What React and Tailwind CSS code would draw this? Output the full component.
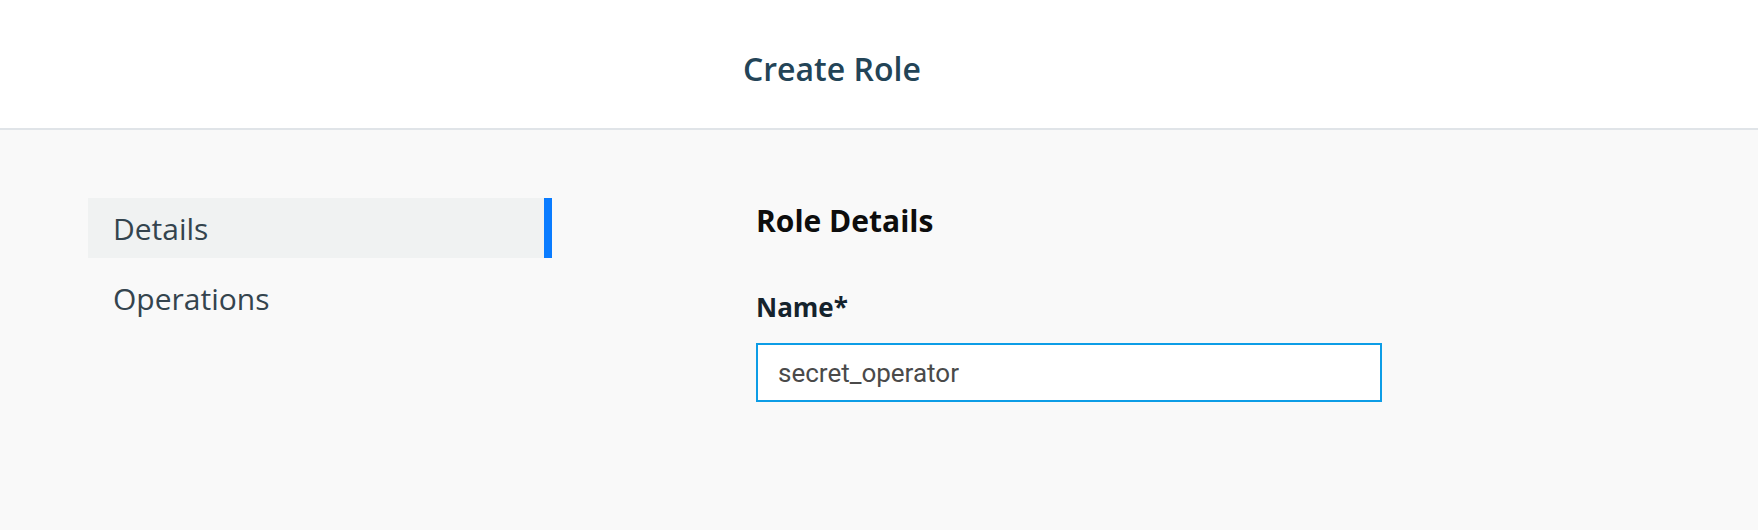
export default function App() {
  const items = [
    { label: 'Details', active: true },
    { label: 'Operations', active: false },
  ];

  return (
    <div className="min-h-screen flex flex-col bg-[#f9f9f9] font-['Open_Sans',sans-serif]">
      {/* Header */}
      <header className="h-[130px] bg-white border-b-2 border-[#e0e4e8] pl-[743px] pt-[47px]">
        <h1 className="text-[32px] leading-[44px] font-semibold text-[#234457]">Create Role</h1>
      </header>

      {/* Body */}
      <div className="flex-1 flex pt-[68px] pl-[88px]">
        <nav className="w-[464px] flex flex-col gap-[10px]">
          {items.map(({ label, active }) => (
            <div
              key={label}
              className={
                active
                  ? 'h-[60px] flex items-center pl-[25px] text-[30px] text-[#34444e] bg-[#f0f2f2] border-r-8 border-[#0a7cff]'
                  : 'h-[60px] flex items-center pl-[25px] text-[30px] text-[#34444e]'
              }
            >
              {label}
            </div>
          ))}
        </nav>

        <div className="ml-[204px] w-[626px]">
          <h2 className="text-[30px] font-bold text-[#0d0d0d]">Role Details</h2>
          <label className="block mt-[45px] text-[26px] font-bold text-[#15232d]">Name*</label>
          <input
            defaultValue="secret_operator"
            className="mt-[16px] w-full h-[59px] bg-white border-2 border-[#0d9de6] pl-[20px] pr-4 text-[26px] text-[#4a4a4a] font-['Roboto',sans-serif] outline-none"
          />
        </div>
      </div>
    </div>
  );
}
